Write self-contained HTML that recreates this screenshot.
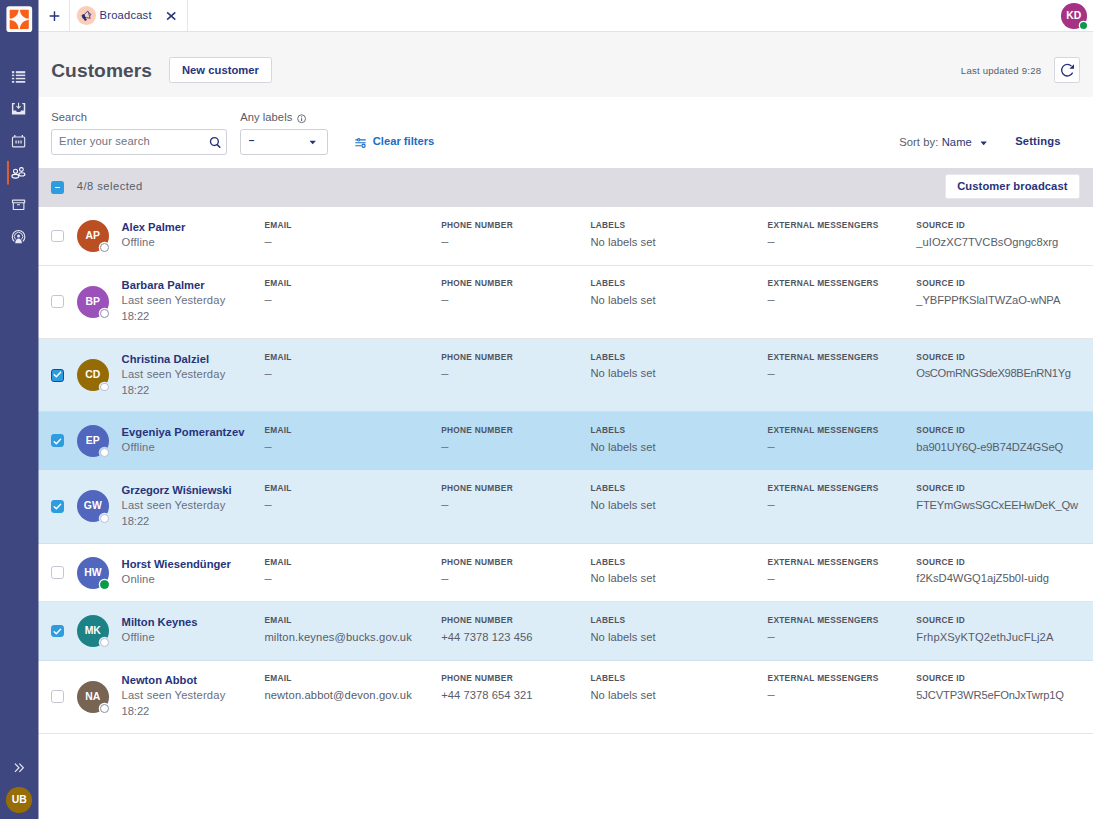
<!DOCTYPE html>
<html lang="en">
<head>
<meta charset="utf-8">
<title>Customers</title>
<style>
*{box-sizing:border-box;margin:0;padding:0}
html,body{width:1093px;height:819px;overflow:hidden;background:#fff}
body{font-family:"Liberation Sans",sans-serif}
#app{zoom:0.8;width:1366.25px;height:1023.75px;position:relative;font-size:14px;color:#585c69;overflow:hidden;background:#fff}
i{font-style:normal}
.side{position:absolute;left:0;top:0;width:50px;height:100%;background:linear-gradient(to right,#3f4780 0,#3f4780 47.5px,rgba(63,71,128,0) 48.75px);z-index:2}
.ub{position:absolute;left:8px;bottom:8px;width:32px;height:32px;border-radius:50%;background:#966d06;color:#fff;font-weight:bold;font-size:13px;text-align:center;line-height:32px}
.top{position:absolute;left:48px;top:0;right:0;height:40px;border-bottom:1px solid #e3e3e7;background:#fff}
.plus{position:absolute;left:0;top:0;width:40px;height:39px;border-right:1px solid #e6e6ea}
.tab{position:absolute;left:40px;top:0;width:147px;height:39px;border-right:1px solid #e6e6ea}
.tab .ic{display:none}
.tab .tx{position:absolute;left:36.5px;top:0;line-height:38px;color:#2a3476;font-size:14px;white-space:nowrap;letter-spacing:.24px}
.kd{position:absolute;right:8px;top:3.8px;width:32px;height:32px;border-radius:50%;background:#a63285;color:#fff;font-weight:bold;font-size:13px;text-align:center;line-height:32px}
.kd i{position:absolute;left:23.4px;top:23.4px;width:9px;height:9px;border-radius:50%;background:#0a9a48;box-shadow:0 0 0 1.6px #fff}
.head{position:absolute;left:48px;top:40px;right:0;height:81.25px;background:#f6f6f6}
.head h1{position:absolute;left:16px;top:32.3px;font-size:24px;line-height:32px;color:#4a4e5b;font-weight:bold;white-space:nowrap;letter-spacing:.09px}
.btn{position:absolute;background:#fff;border:1px solid #d6d6de;border-radius:3px;color:#27337a;font-weight:bold;font-size:14px;text-align:center;white-space:nowrap}
.main{position:absolute;left:48px;top:121.25px;right:0;bottom:0;background:#fff}
.lbl{position:absolute;font-size:14px;line-height:20px;color:#585c69;white-space:nowrap}
.inp{position:absolute;height:32px;border:1px solid #cfcfd8;border-radius:3.5px;background:#fff}
.selbar{position:absolute;left:0;top:88.65px;right:0;height:48.6px;background:#dcdce2}
.selbar .cbm{position:absolute;left:16px;top:16.2px;width:16px;height:16px;border-radius:3.5px;background:#2d9de0}
.selbar .cbm:after{content:"";position:absolute;left:4.7px;top:7.15px;width:6.6px;height:1.7px;border-radius:1px;background:#fff}
#rows{position:absolute;left:0;right:0;top:137.9px}
.row{position:relative;height:72.9px;border-bottom:1px solid #e4e4e9}
.row.d{height:91.7px}
.row.sel{background:#dcedf8;border-bottom-color:#d0e0ec}
.row.hov{background:#badef4;border-bottom-color:#c6d9e8}
.row .cb{position:absolute;left:16px;top:50%;margin-top:-8px;width:16px;height:16px;border:1px solid #c3c5d0;border-radius:3.5px;background:#fff}
.row.sel .cb{background:#2d9de0;border-color:#2d9de0}
.row.foc .cb{box-shadow:0 0 0 0 #1443b8;border:2px solid #1443b8}
.row .cb svg{position:absolute;left:-1px;top:-1px;width:16px;height:16px}
.row.foc .cb svg{left:-2px;top:-2px}
.av{position:absolute;left:48px;top:50%;margin-top:-20.2px;width:40px;height:40px;border-radius:50%;color:#fff;font-weight:bold;font-size:13px;text-align:center;line-height:40px}
.av i{position:absolute;left:29.5px;top:29.5px;width:11px;height:11px;border-radius:50%;background:#fff;border:1.4px solid #8b90a6;box-shadow:0 0 0 1.6px #fff}
.row.sel .av i{box-shadow:0 0 0 1.6px #dcedf8;border-color:#b9c0d2}
.row.hov .av i{box-shadow:0 0 0 1.6px #badef4}
.av i.on{background:#0a9a48;border-color:#0a9a48}
.nm{position:absolute;left:104px;top:14.6px;line-height:20px;color:#27337a;font-weight:bold;font-size:14px;white-space:nowrap}
.st{position:absolute;left:104px;top:33.5px;line-height:20px;color:#6a6e7b;white-space:nowrap;letter-spacing:.2px}
.col{position:absolute;top:15.66px;white-space:nowrap}
.col b{display:block;font-size:10.4px;letter-spacing:.36px;color:#50545f;line-height:14px;font-weight:bold}
.col span{display:block;font-size:14px;line-height:20px;margin-top:3.4px;color:#585c69}
.col .nl{letter-spacing:.06px}.col .em{letter-spacing:.16px}.col .ph{letter-spacing:.07px}
.col span.dash{font-size:16px;position:relative;top:.4px;color:#747885}
.c1{left:282.5px}.c2{left:503.5px}.c3{left:690px}.c4{left:911.5px}.c5{left:1097.4px}
</style>
</head>
<body>
<div id="app">
  <div class="side"><div class="ub">UB</div></div>
  <div class="top">
    <div class="plus"></div>
    <div class="tab"><span class="ic"></span><span class="tx">Broadcast</span></div>
    <div class="kd">KD<i></i></div>
  </div>
  <div class="head">
    <h1>Customers</h1>
    <div class="btn" style="left:163.6px;top:31.75px;width:128px;height:32px;line-height:30px;letter-spacing:.065px">New customer</div>
    <div class="lbl" style="right:64.6px;top:40.8px;font-size:12px;line-height:16px;letter-spacing:.27px">Last updated 9:28</div>
    <div class="btn" style="right:16.3px;top:31.75px;width:32px;height:32px"></div>
  </div>
  <div class="main">
    <div class="lbl" style="left:16px;top:15.1px;letter-spacing:.07px">Search</div>
    <div class="inp" style="left:16px;top:40.5px;width:220px"><span class="lbl" style="left:8.6px;top:0;line-height:28.6px;color:#6f7380;letter-spacing:.175px">Enter your search</span></div>
    <div class="lbl" style="left:252.300px;top:15.100px;letter-spacing:.06px">Any labels</div>
    <div class="inp" style="left:252.400px;top:40.500px;width:109.500px"><span class="lbl" style="left:9.400px;top:0;line-height:28.600px;color:#27337a;font-weight:bold;font-size:12.500px">–</span></div>
    <div class="lbl" style="left:418px;top:45.100px;color:#1b6dc4;font-weight:bold">Clear filters</div>
    <div class="lbl" style="left:1076px;top:46.500px;letter-spacing:.115px">Sort by: <span style="color:#2a3476">Name</span></div>
    
    <div class="lbl" style="left:1221px;top:45.100px;color:#27337a;font-weight:bold;letter-spacing:.21px">Settings</div>
    <div class="selbar">
      <i class="cbm"></i>
      <div class="lbl" style="left:48px;top:12.900px;letter-spacing:.58px">4/8 selected</div>
      <div class="btn" style="right:16.300px;top:8.200px;width:169px;height:31.200px;line-height:29.400px;border-color:#e6e6ec;letter-spacing:.11px">Customer broadcast</div>
    </div>
    <div id="rows">
      <div class="row"><i class="cb"></i><div class="av" style="background:#bc4e24">AP<i></i></div><div class="nm" style="letter-spacing:-0.05px">Alex Palmer</div><div class="st">Offline</div>
        <div class="col c1"><b>EMAIL</b><span class="dash">–</span></div><div class="col c2"><b>PHONE NUMBER</b><span class="dash">–</span></div><div class="col c3"><b>LABELS</b><span class="nl">No labels set</span></div><div class="col c4"><b>EXTERNAL MESSENGERS</b><span class="dash">–</span></div><div class="col c5"><b>SOURCE ID</b><span style="letter-spacing:0.012px">_uIOzXC7TVCBsOgngc8xrg</span></div></div>
      <div class="row d"><i class="cb"></i><div class="av" style="background:#9b51b9">BP<i></i></div><div class="nm" style="letter-spacing:0.04px">Barbara Palmer</div><div class="st">Last seen Yesterday<br><i style="letter-spacing:-.1px">18:22</i></div>
        <div class="col c1"><b>EMAIL</b><span class="dash">–</span></div><div class="col c2"><b>PHONE NUMBER</b><span class="dash">–</span></div><div class="col c3"><b>LABELS</b><span class="nl">No labels set</span></div><div class="col c4"><b>EXTERNAL MESSENGERS</b><span class="dash">–</span></div><div class="col c5"><b>SOURCE ID</b><span style="letter-spacing:-0.107px">_YBFPPfKSlaITWZaO-wNPA</span></div></div>
      <div class="row d sel foc"><i class="cb"><svg viewBox="0 0 16 16"><path d="M4 8.3l2.7 2.7L12 5.4" fill="none" stroke="#fff" stroke-width="1.75" stroke-linecap="round" stroke-linejoin="round"/></svg></i><div class="av" style="background:#946b04">CD<i></i></div><div class="nm" style="letter-spacing:0.04px">Christina Dalziel</div><div class="st">Last seen Yesterday<br><i style="letter-spacing:-.1px">18:22</i></div>
        <div class="col c1"><b>EMAIL</b><span class="dash">–</span></div><div class="col c2"><b>PHONE NUMBER</b><span class="dash">–</span></div><div class="col c3"><b>LABELS</b><span class="nl">No labels set</span></div><div class="col c4"><b>EXTERNAL MESSENGERS</b><span class="dash">–</span></div><div class="col c5"><b>SOURCE ID</b><span style="letter-spacing:-0.453px">OsCOmRNGSdeX98BEnRN1Yg</span></div></div>
      <div class="row sel hov" style="height:70.9px;border-bottom:0"><i class="cb"><svg viewBox="0 0 16 16"><path d="M4 8.3l2.7 2.7L12 5.4" fill="none" stroke="#fff" stroke-width="1.75" stroke-linecap="round" stroke-linejoin="round"/></svg></i><div class="av" style="background:#5166bd">EP<i></i></div><div class="nm" style="letter-spacing:0.07px">Evgeniya Pomerantzev</div><div class="st">Offline</div>
        <div class="col c1"><b>EMAIL</b><span class="dash">–</span></div><div class="col c2"><b>PHONE NUMBER</b><span class="dash">–</span></div><div class="col c3"><b>LABELS</b><span class="nl">No labels set</span></div><div class="col c4"><b>EXTERNAL MESSENGERS</b><span class="dash">–</span></div><div class="col c5"><b>SOURCE ID</b><span style="letter-spacing:-0.175px">ba901UY6Q-e9B74DZ4GSeQ</span></div></div>
      <div class="row d sel" style="height:93.7px;border-top:1px solid #c6d9e8"><i class="cb"><svg viewBox="0 0 16 16"><path d="M4 8.3l2.7 2.7L12 5.4" fill="none" stroke="#fff" stroke-width="1.75" stroke-linecap="round" stroke-linejoin="round"/></svg></i><div class="av" style="background:#5166bd">GW<i></i></div><div class="nm" style="letter-spacing:-0.125px">Grzegorz Wiśniewski</div><div class="st">Last seen Yesterday<br><i style="letter-spacing:-.1px">18:22</i></div>
        <div class="col c1"><b>EMAIL</b><span class="dash">–</span></div><div class="col c2"><b>PHONE NUMBER</b><span class="dash">–</span></div><div class="col c3"><b>LABELS</b><span class="nl">No labels set</span></div><div class="col c4"><b>EXTERNAL MESSENGERS</b><span class="dash">–</span></div><div class="col c5"><b>SOURCE ID</b><span style="letter-spacing:-0.255px">FTEYmGwsSGCxEEHwDeK_Qw</span></div></div>
      <div class="row"><i class="cb"></i><div class="av" style="background:#5166bd">HW<i class="on"></i></div><div class="nm" style="letter-spacing:0px">Horst Wiesendünger</div><div class="st">Online</div>
        <div class="col c1"><b>EMAIL</b><span class="dash">–</span></div><div class="col c2"><b>PHONE NUMBER</b><span class="dash">–</span></div><div class="col c3"><b>LABELS</b><span class="nl">No labels set</span></div><div class="col c4"><b>EXTERNAL MESSENGERS</b><span class="dash">–</span></div><div class="col c5"><b>SOURCE ID</b><span style="letter-spacing:-0.027px">f2KsD4WGQ1ajZ5b0I-uidg</span></div></div>
      <div class="row sel"><i class="cb"><svg viewBox="0 0 16 16"><path d="M4 8.3l2.7 2.7L12 5.4" fill="none" stroke="#fff" stroke-width="1.75" stroke-linecap="round" stroke-linejoin="round"/></svg></i><div class="av" style="background:#1d8286">MK<i></i></div><div class="nm" style="letter-spacing:0px">Milton Keynes</div><div class="st">Offline</div>
        <div class="col c1"><b>EMAIL</b><span class="em">milton.keynes@bucks.gov.uk</span></div><div class="col c2"><b>PHONE NUMBER</b><span class="ph">+44 7378 123 456</span></div><div class="col c3"><b>LABELS</b><span class="nl">No labels set</span></div><div class="col c4"><b>EXTERNAL MESSENGERS</b><span class="dash">–</span></div><div class="col c5"><b>SOURCE ID</b><span style="letter-spacing:0.128px">FrhpXSyKTQ2ethJucFLj2A</span></div></div>
      <div class="row d"><i class="cb"></i><div class="av" style="background:#776452">NA<i></i></div><div class="nm" style="letter-spacing:0px">Newton Abbot</div><div class="st">Last seen Yesterday<br><i style="letter-spacing:-.1px">18:22</i></div>
        <div class="col c1"><b>EMAIL</b><span class="em">newton.abbot@devon.gov.uk</span></div><div class="col c2"><b>PHONE NUMBER</b><span class="ph">+44 7378 654 321</span></div><div class="col c3"><b>LABELS</b><span class="nl">No labels set</span></div><div class="col c4"><b>EXTERNAL MESSENGERS</b><span class="dash">–</span></div><div class="col c5"><b>SOURCE ID</b><span style="letter-spacing:-0.198px">5JCVTP3WR5eFOnJxTwrp1Q</span></div></div>
    </div>
  </div>
  <svg id="icons" viewBox="0 0 1366.25 1023.75" style="position:absolute;left:0;top:0;width:1366.25px;height:1023.75px;pointer-events:none;z-index:3">
    <rect x="8" y="7.700" width="32.200" height="32.400" rx="3.500" fill="#fafafa"/>
    <path transform="translate(12.100 12.200) scale(.98)" fill="#fa5f17" d="M1 0h10.300c0 6.240-5.060 11.300-11.300 11.300v-10.300a1 1 0 0 1 1-1zM23.400 0a1 1 0 0 1 1 1v10.300c-6.240 0-11.300-5.060-11.300-11.300zM0 23.400v-10.300c6.240 0 11.300 5.060 11.300 11.300h-10.300a1 1 0 0 1-1-1zM24.400 13.100v10.300a1 1 0 0 1-1 1h-10.300c0-6.240 5.060-11.300 11.300-11.300z"/>
    <g transform="translate(13.200 86.250)" fill="#dfe1ee"><rect x="1.700" y="2.650" width="2.900" height="2.700"/><rect x="6.600" y="2.650" width="11.750" height="2.700"/><rect x="1.700" y="7" width="2.900" height="1.900"/><rect x="6.600" y="7" width="11.750" height="1.900"/><rect x="1.700" y="11" width="2.900" height="1.900"/><rect x="6.600" y="11" width="11.750" height="1.900"/><rect x="1.700" y="15" width="2.900" height="2.200"/><rect x="6.600" y="15" width="11.750" height="2.200"/></g>
    <g transform="translate(13.200 125.900)"><path fill="#e6e8f2" d="M1.700 2.700h3.600v1.600h-1.800v7.900h3.300l1.100 2h4.200l1.100-2h3.300v-7.900h-1.800v-1.600h3.650v14.650h-16.650z"/><path d="M10 2.500v6.600M7.300 6.600l2.700 2.700 2.700-2.700" fill="none" stroke="#e6e8f2" stroke-width="1.300"/></g>
    <g transform="translate(13.200 166.400)" fill="none" stroke="#e6e8f2"><rect x="2.400" y="4.900" width="15.250" height="12.300" rx="1.200" stroke-width="1.400"/><path d="M5.300 2.300v2.600M14.750 2.300v2.600" stroke-width="1.600"/><path fill="#e6e8f2" stroke="none" opacity=".85" d="M6 9.200h1.800v3.800h-1.800zM9.100 9.200h1.800v3.800h-1.800zM12.200 9.200h1.800v3.800h-1.800z"/></g>
    <rect x="8.700" y="201" width="2.500" height="30" rx="1" fill="#e0602b"/>
    <g transform="translate(13.200 205.900)" fill="none" stroke="#fff" stroke-width="1.350"><circle cx="13.550" cy="6" r="2.350"/><ellipse cx="14.150" cy="12.100" rx="3.800" ry="2"/><circle cx="6.200" cy="8.200" r="2.500" fill="#3f4780"/><ellipse cx="6.050" cy="14.450" rx="4.350" ry="2.350" fill="#3f4780"/></g>
    <g transform="translate(13.200 246)" fill="none" stroke="#e6e8f2" stroke-width="1.400"><rect x="2.400" y="4.100" width="15.250" height="3.300" rx=".5"/><path d="M3.400 7.400v8.100a.4.400 0 0 0 .4.400h12.450a.4.400 0 0 0 .4-.4v-8.100"/><path d="M8.100 9.900h3.600" stroke-width="1.300"/></g>
    <g transform="translate(13.200 285.800)" fill="none" stroke="#e6e8f2"><path d="M4.700 16a7.850 7.850 0 1 1 10.600 0" stroke-width="1.400"/><path d="M6.300 13.500a5.200 5.200 0 1 1 7.400 0" stroke-width="1.200"/><circle cx="10" cy="9.300" r="1.900" fill="#e6e8f2" stroke="none"/><path d="M5.700 18.200c.5-3.900 2-5.900 4.300-5.900s3.800 2 4.300 5.900z" fill="#e6e8f2" stroke="none"/></g>
    <path d="M18.700 954.500l5 5.200-5 5.200M24.200 954.500l5 5.200-5 5.200" fill="none" stroke="#e6e8f2" stroke-width="1.500"/>
    <path d="M68.100 14.100v12M62.100 20.100h12" stroke="#27337a" stroke-width="1.800"/>
    <circle cx="108" cy="19.400" r="12" fill="#fccdb8"/>
    <g transform="translate(96 7.400) translate(12 12) scale(.84) rotate(-17) translate(-11.600 -12.200)" stroke="#1f2d7e" stroke-width="1.050" stroke-linejoin="round"><path d="M5.400 9.900h3.300v4.400h-3.300z" fill="#1f2d7e"/><path d="M8.700 9.900l7.100-3.500v11.400l-7.100-3.500z" fill="none"/><path d="M6.400 14.300h2.300l1 4.300h-2.300z" fill="#1f2d7e"/><path d="M16.300 10.200a1.900 1.900 0 0 1 0 3.800" fill="none"/></g>
    <path d="M208.900 15.500l10.200 9M219.100 15.500l-10.200 9" stroke="#27337a" stroke-width="1.900"/>
    <g transform="translate(1326.250 79.750)"><path d="M14.530 11.040A7.200 7.200 0 1 1 13.090 2.910" fill="none" stroke="#27337a" stroke-width="1.600"/><path d="M16.200.6v5.500h-5.700z" fill="#1c2a7c"/></g>
    <g transform="translate(262 171)"><circle cx="6" cy="6" r="4.900" fill="none" stroke="#27337a" stroke-width="1.700"/><path d="M9.500 9.700l3.300 3.300" stroke="#27337a" stroke-width="2" stroke-linecap="round"/></g>
    <g transform="translate(371 142.400)"><circle cx="6" cy="6" r="4.900" fill="none" stroke="#585c69" stroke-width="1.100"/><path d="M6 5.300v3.400" stroke="#585c69" stroke-width="1.300"/><circle cx="6" cy="3.600" r=".8" fill="#585c69"/></g>
    <path transform="translate(386.900 175.200)" d="M.8.600h6.400a.4.400 0 0 1 .3.700l-3.200 3.600a.4.400 0 0 1-.6 0l-3.200-3.600a.4.400 0 0 1 .3-.7z" fill="#27337a"/>
    <path transform="translate(1225.600 176.200)" d="M.8.600h6.400a.4.400 0 0 1 .3.700l-3.200 3.600a.4.400 0 0 1-.6 0l-3.200-3.600a.4.400 0 0 1 .3-.7z" fill="#27337a"/>
    <g transform="translate(443.600 172.500)" fill="none" stroke="#1b6dc4" stroke-width="1.400"><path d="M.5 2.300h3M6.600 2.300h7M.5 6h13M.5 9.700h7.300"/><circle cx="4.800" cy="2.300" r="1.500"/><circle cx="10.800" cy="9.700" r="2" stroke-width="1.500"/></g>
  </svg>
</div>
</body>
</html>
